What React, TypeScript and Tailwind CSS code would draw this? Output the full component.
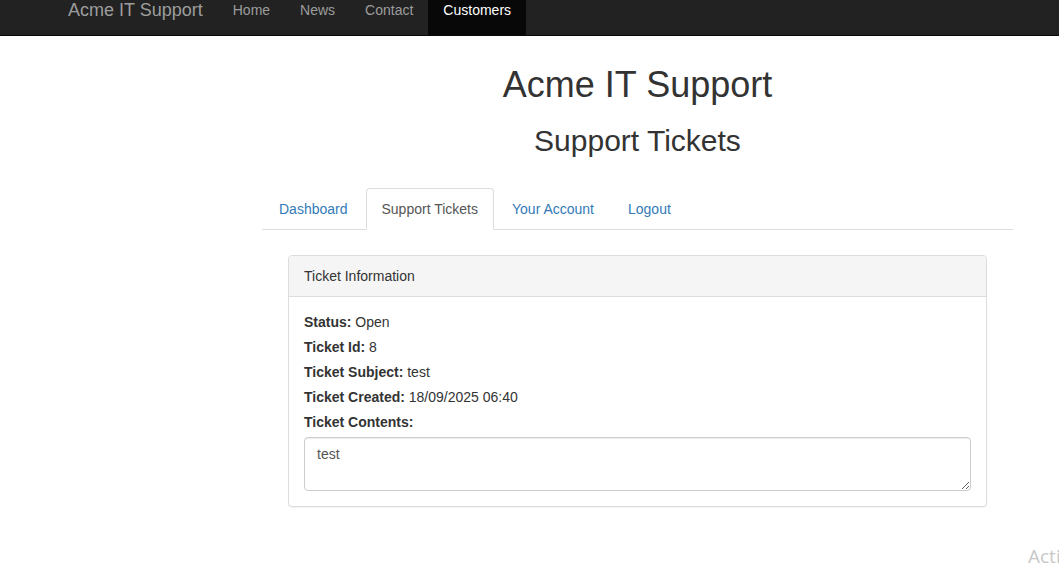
import React from "react";

export default function App() {
  const font = { fontFamily: '"Liberation Sans", Arial, Helvetica, sans-serif' };
  return (
    <div className="relative min-h-[575px] overflow-hidden bg-white text-[14px] leading-[20px] text-[#333]" style={font}>
      <nav className="-mt-[15px] box-border h-[51px] border-b border-[#080808] bg-[#222]">
        <div className="flex h-[50px] pl-[53px]">
          <a className="block h-[50px] px-[15px] py-[15px] text-[18px] leading-[20px] text-[#9d9d9d]">Acme IT Support</a>
          <ul className="flex">
            <li><a className="block px-[15px] py-[15px] text-[#9d9d9d]">Home</a></li>
            <li><a className="block px-[15px] py-[15px] text-[#9d9d9d]">News</a></li>
            <li><a className="block px-[15px] py-[15px] text-[#9d9d9d]">Contact</a></li>
            <li><a className="block bg-[#080808] px-[15px] py-[15px] text-white">Customers</a></li>
          </ul>
        </div>
      </nav>
      <div className="ml-[262px] w-[751px]">
        <h1 className="mt-[29px] text-center text-[36px] leading-[1.1] font-normal text-[#333]">Acme IT Support</h1>
        <h2 className="mt-[19px] text-center text-[30px] leading-[1.1] font-normal text-[#333]">Support Tickets</h2>
        <ul className="mt-[31px] flex border-b border-[#ddd] pl-[1px]">
          <li className="-mb-px"><a className="mr-[2px] block rounded-t-[4px] border border-transparent px-[15px] py-[10px] text-[#337ab7]">Dashboard</a></li>
          <li className="-mb-px"><a className="mr-[2px] block rounded-t-[4px] border border-[#ddd] border-b-transparent bg-white px-[15px] py-[10px] text-[#555]">Support Tickets</a></li>
          <li className="-mb-px"><a className="mr-[2px] block rounded-t-[4px] border border-transparent px-[15px] py-[10px] text-[#337ab7]">Your Account</a></li>
          <li className="-mb-px"><a className="mr-[2px] block rounded-t-[4px] border border-transparent px-[15px] py-[10px] text-[#337ab7]">Logout</a></li>
        </ul>
        <div className="mx-[26px] mt-[25px] rounded-[4px] border border-[#ddd] bg-white shadow-[0_1px_1px_rgba(0,0,0,0.05)]">
          <div className="rounded-t-[3px] border-b border-[#ddd] bg-[#f5f5f5] px-[15px] py-[10px] text-[#333]">Ticket Information</div>
          <div className="p-[15px]">
            <p className="mb-[5px]"><b>Status:</b> Open</p>
            <p className="mb-[5px]"><b>Ticket Id:</b> 8</p>
            <p className="mb-[5px]"><b>Ticket Subject:</b> test</p>
            <p className="mb-[5px]"><b>Ticket Created:</b> 18/09/2025 06:40</p>
            <p className="mb-[5px]"><b>Ticket Contents:</b></p>
            <textarea
              readOnly
              defaultValue="test"
              className="block h-[54px] w-full rounded-[4px] border border-[#ccc] px-[12px] py-[6px] text-[14px] leading-[20px] text-[#555] shadow-[inset_0_1px_1px_rgba(0,0,0,0.075)] outline-none"
              style={font}
            />
          </div>
        </div>
      </div>
      <div className="absolute left-[1028px] top-[546px] whitespace-nowrap text-[19px] text-[#c8c8c8]" style={{ fontFamily: '"Open Sans", "Noto Sans", sans-serif' }}>
        Activate Windows
      </div>
    </div>
  );
}
